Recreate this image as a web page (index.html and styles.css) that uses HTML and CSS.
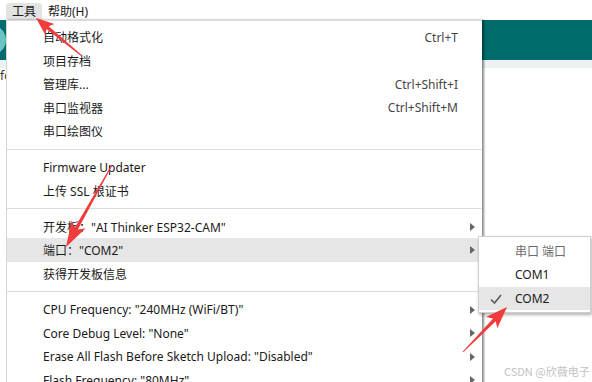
FILE: index.html
```html
<!DOCTYPE html>
<html>
<head lang="zh">
    <meta charset="UTF-8">
    <title>工具菜单</title>
    <link rel="stylesheet" href="styles.css">
</head>
<body>
    <div class="menubar">
        <span class="mb-item active">工具</span>
        <span class="mb-item">帮助(H)</span>
    </div>
    <div class="app">
        <div class="toolbar"><span class="round-btn"></span></div>
        <div class="tabbar"></div>
        <div class="editor">
            <div class="code-line">fe</div>
        </div>
    </div>

    <div class="menu">
        <div class="item"><span>自动格式化</span><span class="key">Ctrl+T</span></div>
        <div class="item"><span>项目存档</span></div>
        <div class="item"><span>管理库...</span><span class="key">Ctrl+Shift+I</span></div>
        <div class="item"><span>串口监视器</span><span class="key">Ctrl+Shift+M</span></div>
        <div class="item"><span>串口绘图仪</span></div>
        <div class="sep"></div>
        <div class="item"><span>Firmware Updater</span></div>
        <div class="item"><span>上传 SSL 根证书</span></div>
        <div class="sep"></div>
        <div class="item"><span>开发板："AI Thinker ESP32-CAM"</span><span class="more"></span></div>
        <div class="item hover"><span>端口："COM2"</span><span class="more"></span></div>
        <div class="item"><span>获得开发板信息</span></div>
        <div class="sep"></div>
        <div class="item"><span>CPU Frequency: "240MHz (WiFi/BT)"</span><span class="more"></span></div>
        <div class="item"><span>Core Debug Level: "None"</span><span class="more"></span></div>
        <div class="item"><span>Erase All Flash Before Sketch Upload: "Disabled"</span><span class="more"></span></div>
        <div class="item"><span>Flash Frequency: "80MHz"</span><span class="more"></span></div>
    </div>

    <div class="submenu">
        <div class="sub-item disabled">串口 端口</div>
        <div class="sub-item">COM1</div>
        <div class="sub-item hover">
            <svg class="check" width="12" height="10" viewBox="0 0 12 10"><polyline points="1,5.5 4.5,9 11,1" fill="none" stroke="#5a5a5a" stroke-width="1.6"/></svg>
            COM2
        </div>
    </div>

    <div class="watermark">CSDN @欣薇电子</div>

    <svg class="marks" width="592" height="382" viewBox="0 0 592 382">
        <polygon fill="#f23b3b" points="82.3,55.6 48.7,26.2 54.4,24.1 36,18 45.4,34.9 46.5,29 81.7,56.4"/>
        <polygon fill="#f23b3b" points="112.4,165.2 77.9,229.6 85.7,228.2 66,247 71.7,220.4 74.7,227.8 111.6,164.8"/>
        <polygon fill="#f23b3b" points="463.4,352.3 495.7,321.2 497.3,328.3 507,307 485.9,317.1 493.1,318.6 462.6,351.7"/>
    </svg>
</body>
</html>
```

FILE: styles.css
```css
*{
    margin: 0;
    padding: 0;
}
body{
    width: 592px;
    height: 382px;
    overflow: hidden;
    position: relative;
    background: #fff;
    font-family: "Noto Sans", "Noto Sans CJK SC", sans-serif;
    font-size: 12px;
    color: #1a1a1a;
}
.menubar{
    height: 20px;
    display: flex;
    align-items: flex-end;
    padding-left: 6px;
}
.mb-item{
    height: 17px;
    line-height: 17px;
    padding: 0 6px;
    border-radius: 3px 3px 0 0;
}
.mb-item.active{
    background: #e3e3e3;
}
.toolbar{
    height: 40px;
    background: #016b6b;
    display: flex;
    align-items: center;
    overflow: hidden;
}
.round-btn{
    width: 30px;
    height: 30px;
    border-radius: 50%;
    margin-left: -24px;
    background: #6cc3c4;
}
.tabbar{
    height: 8px;
    background: #ecf1f1;
}
.code-line{
    font-size: 12px;
    line-height: 16px;
    color: #333;
}

.menu{
    position: absolute;
    left: 6px;
    top: 20px;
    width: 476px;
    height: 380px;
    box-sizing: border-box;
    background: #fff;
    border-left: 1px solid #d6d6d6;
    border-top: 1px solid #dcdcdc;
    box-shadow: 2px 0 2px rgba(0, 0, 0, 0.45);
    padding-top: 4.25px;
}
.item{
    height: 23.5px;
    display: flex;
    align-items: center;
    padding: 0 7px 0 36px;
    white-space: nowrap;
}
.item.hover{
    background: #e6e6e6;
}
.key{
    margin-left: auto;
    margin-right: 17px;
    color: #454545;
}
.more{
    margin-left: auto;
    width: 0;
    height: 0;
    border-left: 5px solid #666;
    border-top: 4px solid transparent;
    border-bottom: 4px solid transparent;
}
.sep{
    height: 1px;
    background: #dcdcdc;
    margin: 6px 0 5.5px;
}

.submenu{
    position: absolute;
    left: 478px;
    top: 236px;
    width: 113px;
    box-sizing: border-box;
    background: #fff;
    border: 1px solid #cfcfcf;
    box-shadow: 1px 2px 3px rgba(0, 0, 0, 0.3);
    padding: 2.5px 0 2px;
}
.sub-item{
    height: 23.5px;
    line-height: 23.5px;
    padding-left: 36px;
    position: relative;
}
.sub-item.disabled{
    color: #6b6b6b;
}
.sub-item.hover{
    background: #e6e6e6;
}
.check{
    position: absolute;
    left: 11px;
    top: 7px;
}

.watermark{
    position: absolute;
    left: 504px;
    top: 363px;
    font-family: "Noto Sans CJK SC", sans-serif;
    font-size: 11px;
    line-height: 16px;
    color: #c2c2c2;
    white-space: nowrap;
}
.marks{
    position: absolute;
    left: 0;
    top: 0;
    pointer-events: none;
}
```
